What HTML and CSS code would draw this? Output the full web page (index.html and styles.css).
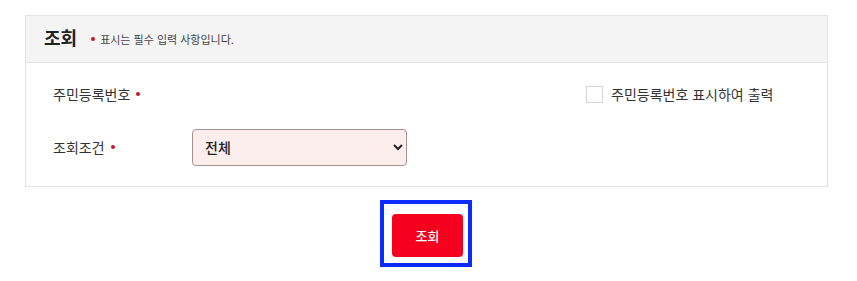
FILE: index.html
```html
<!DOCTYPE html>
<html lang="ko">
<head>
    <meta charset="UTF-8">
    <meta name="viewport" content="width=device-width, initial-scale=1.0">
    <title>조회</title>
    <link rel="stylesheet" href="styles.css">
</head>
<body>

<div class="panel">
    <div class="panel-head">
        <h2 class="panel-title">조회</h2>
        <span class="req-note"><i class="dot"></i>표시는 필수 입력 사항입니다.</span>
    </div>
    <div class="panel-body">
        <div class="form-row">
            <label class="label">주민등록번호<i class="dot"></i></label>
            <label class="check">
                <input type="checkbox">
                <span>주민등록번호 표시하여 출력</span>
            </label>
        </div>
        <div class="form-row">
            <label class="label" for="cond">조회조건<i class="dot"></i></label>
            <select id="cond" class="select">
                <option>전체</option>
            </select>
        </div>
    </div>
</div>

<div class="actions">
    <div class="focus-box">
        <button class="btn-search">조회</button>
    </div>
</div>

</body>
</html>
```

FILE: styles.css
```css
body {
    margin: 0;
    padding: 15px 29px 0 25px;
    font-family: "Noto Sans CJK KR", "Noto Sans", sans-serif;
    color: #333;
    background-color: #fff;
}
.panel {
    border: 1px solid #e3e3e3;
}
.panel-head {
    display: flex;
    align-items: center;
    height: 46px;
    padding-left: 18px;
    background-color: #f4f4f4;
    border-bottom: 1px solid #e3e3e3;
}
.panel-title {
    margin: 0 14px 4px 0;
    font-size: 18px;
    font-weight: 700;
    color: #222;
}
.req-note {
    display: flex;
    align-items: center;
    font-size: 11px;
    color: #444;
}
.dot {
    display: inline-block;
    width: 4px;
    height: 4px;
    margin: 0 0 4px 6px;
    border-radius: 50%;
    background-color: #d0112b;
    vertical-align: middle;
}
.req-note .dot {
    margin: 0 5px 1px 0;
}
.panel-body {
    display: flex;
    flex-direction: column;
    gap: 17px;
    padding: 13px 0 21px 27px;
}
.form-row {
    display: flex;
    align-items: center;
    height: 36px;
}
.label {
    width: 139px;
    font-size: 14px;
    color: #333;
}
.check {
    display: flex;
    align-items: center;
    margin-left: auto;
    width: 241px;
    font-size: 14px;
    color: #333;
}
.check input {
    appearance: none;
    width: 17px;
    height: 17px;
    margin: 0 8px 0 0;
    border: 1px solid #d6d6d6;
    background-color: #fff;
}
.select {
    width: 215px;
    height: 37px;
    padding: 0 8px;
    font-family: inherit;
    font-size: 14px;
    font-weight: 500;
    color: #222;
    background-color: #fdeeee;
    border: 1px solid #a89090;
    border-radius: 4px;
}
.actions {
    display: flex;
    justify-content: center;
    margin-top: 13px;
    padding-right: 1px;
}
.focus-box {
    padding: 10px 5px 6px 8px;
    border: 4px solid #0a2cff;
}
.btn-search {
    width: 71px;
    height: 43px;
    font-family: inherit;
    font-size: 13px;
    font-weight: 500;
    color: #fff;
    background-color: #f5001e;
    border: none;
    border-radius: 4px;
    cursor: pointer;
}
```
